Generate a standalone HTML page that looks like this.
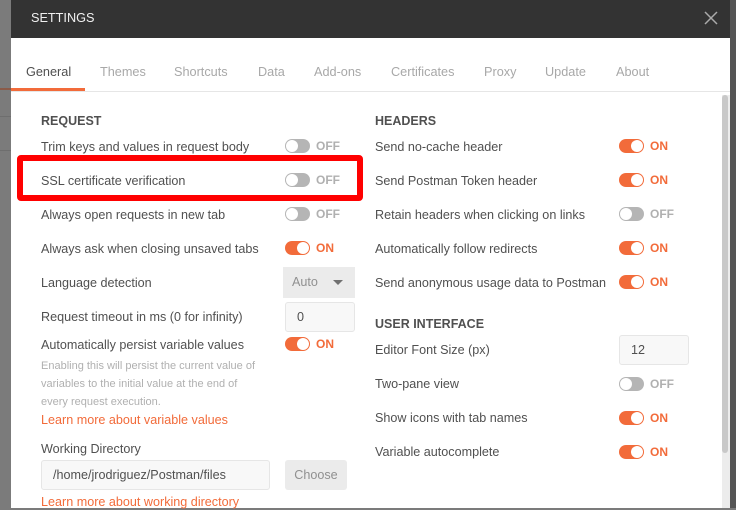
<!DOCTYPE html>
<html><head><style>
*{margin:0;padding:0;box-sizing:border-box}
body{width:736px;height:508px;overflow:hidden;background:#7b7b7b;font-family:"Liberation Sans",sans-serif;position:relative}
.a{position:absolute;white-space:nowrap}
.t{font-size:12.6px;color:#505050;line-height:16px;margin-top:1px}
.h{font-size:12.5px;font-weight:bold;color:#505050;margin-top:1px}
.tg{position:absolute;width:25px;height:14px;border-radius:7px;background:#b5b5b5}
.tg::after{content:"";position:absolute;top:1px;left:1px;width:12px;height:12px;border-radius:50%;background:#fff}
.tg.on{background:#f26b3a}
.tg.on::after{left:12px}
.lb{position:absolute;font-size:12px;font-weight:bold;color:#b0b0b0;line-height:14px}
.lb.on{color:#f26b3a}
.tab{position:absolute;top:65px;font-size:12.7px;color:#a8a8a8}
.in{position:absolute;background:#f8f8f8;border:1px solid #e6e6e6;border-radius:3px;font-size:12.6px;color:#505050;padding-left:11px}
</style></head><body>
<div class="a" style="left:0;top:88px;width:11px;height:2px;background:#8a5a48"></div>
<div class="a" style="left:0;top:116px;width:11px;height:1px;background:#6e6e6e"></div>
<div class="a" style="left:0;top:150px;width:11px;height:1px;background:#6e6e6e"></div>
<div class="a" style="left:730px;top:0;width:6px;height:508px;background:#555"></div>
<div class="a" style="left:11px;top:0;width:719px;height:38px;background:#333"></div>
<div class="a" style="left:31px;top:11px;font-size:12.7px;color:#f0f0f0">SETTINGS</div>
<svg class="a" style="left:704px;top:11px" width="14" height="14"><path d="M1 1L13 13M13 1L1 13" stroke="#aaa" stroke-width="1.5"/></svg>
<div class="a" style="left:11px;top:38px;width:719px;height:470px;background:#fff"></div>
<div class="a" style="left:11px;top:91px;width:719px;height:1px;background:#e6e6e6"></div>
<div class="a" style="left:11px;top:88px;width:74px;height:3px;background:#f26b3a"></div>
<div class="tab" style="left:26px;color:#505050">General</div>
<div class="tab" style="left:100px">Themes</div>
<div class="tab" style="left:174px">Shortcuts</div>
<div class="tab" style="left:258px">Data</div>
<div class="tab" style="left:314px">Add-ons</div>
<div class="tab" style="left:391px">Certificates</div>
<div class="tab" style="left:484px">Proxy</div>
<div class="tab" style="left:545px">Update</div>
<div class="tab" style="left:616px">About</div>
<div class="a" style="left:722px;top:95px;width:8px;height:413px;background:#ececec"></div>
<div class="a" style="left:722px;top:95px;width:6px;height:358px;background:#c8c8c8;border-radius:3px"></div>

<div class="a h" style="left:41px;top:113px">REQUEST</div>
<div class="a h" style="left:375px;top:113px">HEADERS</div>
<div class="a h" style="left:375px;top:316px">USER INTERFACE</div>

<div class="a t" style="left:41px;top:138px">Trim keys and values in request body</div>
<div class="a t" style="left:41px;top:172px">SSL certificate verification</div>
<div class="a t" style="left:41px;top:206px">Always open requests in new tab</div>
<div class="a t" style="left:41px;top:240px">Always ask when closing unsaved tabs</div>
<div class="a t" style="left:41px;top:274px">Language detection</div>
<div class="a t" style="left:41px;top:308px">Request timeout in ms (0 for infinity)</div>
<div class="a t" style="left:41px;top:336px">Automatically persist variable values</div>
<div class="a" style="left:41px;top:357px;font-size:11px;line-height:18px;color:#b0b0b0">Enabling this will persist the current value of<br>variables to the initial value at the end of<br>every request execution.</div>
<div class="a t" style="left:41px;top:411px;color:#f26b3a">Learn more about variable values</div>
<div class="a t" style="left:41px;top:440px">Working Directory</div>
<div class="in" style="left:41px;top:460px;width:229px;height:30px;line-height:28px">/home/jrodriguez/Postman/files</div>
<div class="a" style="left:285px;top:460px;width:62px;height:30px;background:#ebebeb;border-radius:3px;font-size:12.6px;color:#909090;line-height:30px;text-align:center">Choose</div>
<div class="a t" style="left:41px;top:493px;color:#f26b3a">Learn more about working directory</div>

<div class="tg" style="left:285px;top:139px"></div><div class="lb" style="left:316px;top:139px">OFF</div>
<div class="tg" style="left:285px;top:173px"></div><div class="lb" style="left:316px;top:173px">OFF</div>
<div class="tg" style="left:285px;top:207px"></div><div class="lb" style="left:316px;top:207px">OFF</div>
<div class="tg on" style="left:285px;top:241px"></div><div class="lb on" style="left:316px;top:241px">ON</div>
<div class="a" style="left:283px;top:267px;width:72px;height:31px;background:#ebebeb;font-size:12.6px;color:#909090;line-height:31px;padding-left:9px">Auto<span style="position:absolute;left:50px;top:13px;border-left:5px solid transparent;border-right:5px solid transparent;border-top:5px solid #707070"></span></div>
<div class="in" style="left:285px;top:302px;width:70px;height:30px;line-height:28px">0</div>
<div class="tg on" style="left:285px;top:337px"></div><div class="lb on" style="left:316px;top:337px">ON</div>

<div class="a t" style="left:375px;top:138px">Send no-cache header</div>
<div class="a t" style="left:375px;top:172px">Send Postman Token header</div>
<div class="a t" style="left:375px;top:206px">Retain headers when clicking on links</div>
<div class="a t" style="left:375px;top:240px">Automatically follow redirects</div>
<div class="a t" style="left:375px;top:274px">Send anonymous usage data to Postman</div>
<div class="a t" style="left:375px;top:341px">Editor Font Size (px)</div>
<div class="a t" style="left:375px;top:375px">Two-pane view</div>
<div class="a t" style="left:375px;top:409px">Show icons with tab names</div>
<div class="a t" style="left:375px;top:443px">Variable autocomplete</div>

<div class="tg on" style="left:619px;top:139px"></div><div class="lb on" style="left:650px;top:139px">ON</div>
<div class="tg on" style="left:619px;top:173px"></div><div class="lb on" style="left:650px;top:173px">ON</div>
<div class="tg" style="left:619px;top:207px"></div><div class="lb" style="left:650px;top:207px">OFF</div>
<div class="tg on" style="left:619px;top:241px"></div><div class="lb on" style="left:650px;top:241px">ON</div>
<div class="tg on" style="left:619px;top:275px"></div><div class="lb on" style="left:650px;top:275px">ON</div>
<div class="in" style="left:619px;top:335px;width:70px;height:30px;line-height:28px">12</div>
<div class="tg" style="left:619px;top:377px"></div><div class="lb" style="left:650px;top:377px">OFF</div>
<div class="tg on" style="left:619px;top:411px"></div><div class="lb on" style="left:650px;top:411px">ON</div>
<div class="tg on" style="left:619px;top:445px"></div><div class="lb on" style="left:650px;top:445px">ON</div>

<div class="a" style="left:17px;top:155px;width:346px;height:46px;border:6px solid #f00;border-radius:4px"></div>
</body></html>
